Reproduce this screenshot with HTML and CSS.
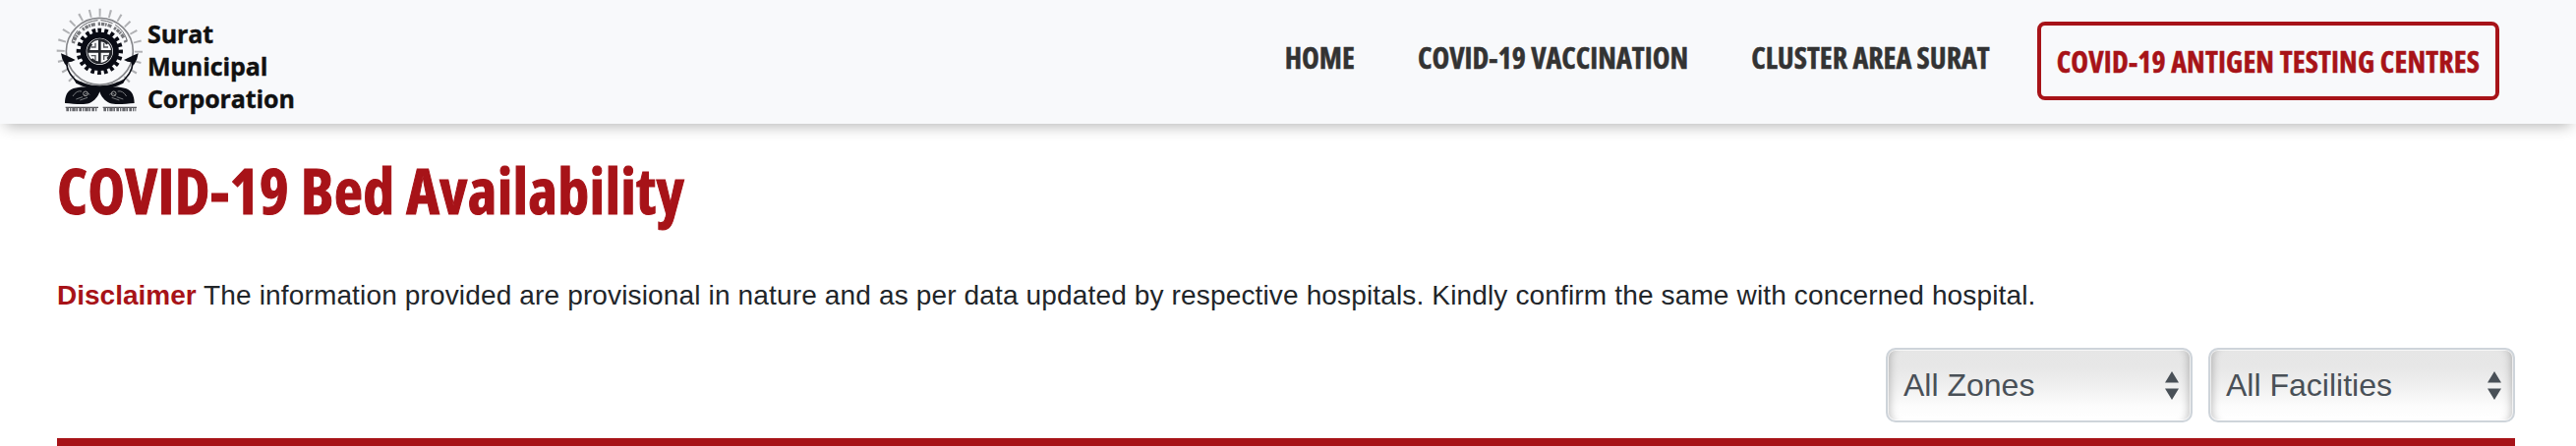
FILE: index.html
```
<!DOCTYPE html>
<html lang="en">

<head>
    <meta charset="UTF-8">
    <meta name="viewport" content="width=device-width, initial-scale=1.0">
    <title>COVID-19 Bed Availability</title>
    <link rel="stylesheet" href="styles.css">
</head>

<body>
    <header class="header">
        <a class="logo" href="#">
            <svg class="emblem" viewBox="0 0 300 348" fill="none">
                <!-- rays -->
                <circle cx="142" cy="145" r="119" stroke="#b0b1b4" stroke-width="24" stroke-dasharray="6 25.16" transform="rotate(-91 142 145)" />
                <path d="M62 246L222 246L200 290L84 290Z" fill="#f8f9fb" />
                <circle cx="142" cy="145" r="102" stroke="#85868a" stroke-width="5" />
                <!-- lettering band -->
                <path d="M61 120A85 85 0 0 1 223 120" stroke="#77787c" stroke-width="10" stroke-dasharray="7 3 10 2 5 3 12 9" />
                <path d="M57 115A88 88 0 0 1 227 115" stroke="#66676b" stroke-width="3" stroke-dasharray="38 9 62 9" />
                <!-- gear -->
                <circle cx="142" cy="145" r="64" stroke="#090b14" stroke-width="14" stroke-dasharray="11 9.106" transform="rotate(-95 142 145)" />
                <circle cx="142" cy="145" r="50" stroke="#090b14" stroke-width="18" />
                <circle cx="142" cy="145" r="37" stroke="#24262c" stroke-width="4" />
                <path d="M142 108V182M105 145H179M142 111Q158 111 166 122M176 145Q176 160 166 168M142 179Q126 179 118 168M108 145Q108 130 118 122" stroke="#24262c" stroke-width="8" />
                <path d="M129 119V132H116M155 119V132H168M129 171V158H116M155 171V158H168" stroke="#55575c" stroke-width="4" />
                <!-- arms -->
                <path d="M42 185C42 205 58 222 74 240M242 185C242 205 226 222 210 240" stroke="#0b0d15" stroke-width="5" />
                <path d="M24 151L42 158L68 171L57 176L46 178L43 190L36 184L28 168ZM260 151L242 158L216 171L227 176L238 178L241 190L248 184L256 168Z" fill="#0b0d15" />
                <path d="M62 226C84 240 112 250 142 250C172 250 200 240 222 226L214 242C190 254 166 262 142 262C118 262 94 254 70 242Z" fill="#0b0d15" />
                <!-- cuffs -->
                <path d="M142 259C120 253 82 250 62 258C43 265 36 281 36 303C61 304 91 310 111 303C127 297 139 280 142 268C145 280 157 297 173 303C193 310 223 304 248 303C248 281 241 265 222 258C202 250 164 253 142 259Z" fill="#0b0d15" />
                <path d="M60 282Q72 263 87 267M70 291L90 284M82 294L105 286M93 280Q104 268 112 277M224 282Q212 263 197 267M214 291L194 284M202 294L179 286M191 280Q180 268 172 277" stroke="#77797d" stroke-width="3" />
                <circle cx="99" cy="274" r="7" stroke="#999" stroke-width="3" />
                <circle cx="185" cy="274" r="7" stroke="#999" stroke-width="3" />
                <!-- motto -->
                <path d="M38 316H138M152 316H255" stroke="#55565b" stroke-width="4" />
                <path d="M40 322H136M154 322H253" stroke="#66676c" stroke-width="11" stroke-dasharray="8 3 4 3 10 2 5 4" />
            </svg>
            <span class="logo-text">Surat<br>Municipal<br>Corporation</span>
        </a>
        <nav class="nav">
            <a href="#">HOME</a>
            <a href="#">COVID-19 VACCINATION</a>
            <a href="#">CLUSTER AREA SURAT</a>
            <a class="btn" href="#">COVID-19 ANTIGEN TESTING CENTRES</a>
        </nav>
    </header>

    <main class="container">
        <h1>COVID-19 Bed Availability</h1>
        <p class="disclaimer"><b>Disclaimer</b> The information provided are provisional in nature and as per data updated by respective hospitals. Kindly confirm the same with concerned hospital.</p>
        <div class="filters">
            <button class="select" type="button">
                <span>All Zones</span>
                <svg class="arrows" viewBox="0 0 14 29"><path d="M7 0L14 11.500H0ZM0 17.500H14L7 29Z" /></svg>
            </button>
            <button class="select" type="button">
                <span>All Facilities</span>
                <svg class="arrows" viewBox="0 0 14 29"><path d="M7 0L14 11.500H0ZM0 17.500H14L7 29Z" /></svg>
            </button>
        </div>
        <div class="bar"></div>
    </main>
</body>

</html>
```
FILE: styles.css
```
* {
    box-sizing: border-box;
    margin: 0;
    padding: 0;
}

body {
    height: 454px;
    overflow: hidden;
    background-color: #fff;
    color: #212529;
    font-family: "Liberation Sans", Arial, sans-serif;
    font-size: 28px;
}

a {
    color: inherit;
    text-decoration: none;
}

.header {
    display: flex;
    justify-content: space-between;
    height: 126px;
    padding: 0 78px 0 54px;
    background-color: #f8f9fb;
    box-shadow: 0 7px 14px -5px rgba(0, 0, 0, 0.3);
}

.logo {
    display: flex;
    padding-top: 4px;
}

.emblem {
    width: 100px;
    height: 116px;
}

.logo-text {
    margin: 14px 0 0 -4px;
    color: #111;
    font: bold 25px/33px "Open Sans", sans-serif;
    letter-spacing: -0.1px;
    -webkit-text-stroke: 0.4px #111;
}

.nav {
    display: flex;
    align-items: flex-start;
    gap: 64px;
    color: #333;
    font: bold 30px/42px "Open Sans", sans-serif;
    font-stretch: 75%;
    letter-spacing: 0.02px;
    white-space: nowrap;
    -webkit-text-stroke: 0.5px;
}

.nav a {
    margin-top: 38px;
}

.nav .btn {
    height: 80px;
    margin: 22px 0 0 -16px;
    padding: 16px 16px 0;
    border: 4px solid #a71318;
    border-radius: 8px;
    color: #a71318;
    letter-spacing: 0.15px;
}

.container {
    padding: 0 62px 0 58px;
}

h1 {
    padding-top: 24px;
    color: #a71318;
    font: bold 64px/88px "Open Sans", sans-serif;
    font-stretch: 75%;
    letter-spacing: 0.25px;
    -webkit-text-stroke: 1px;
}

.disclaimer {
    margin-top: 42px;
    line-height: 42px;
    letter-spacing: 0.15px;
}

.disclaimer b {
    color: #a71318;
    letter-spacing: 0;
}

.filters {
    display: flex;
    justify-content: flex-end;
    gap: 16px;
    margin-top: 32px;
}

.select {
    display: flex;
    align-items: center;
    justify-content: space-between;
    width: 312px;
    height: 76px;
    padding: 0 12px 0 16px;
    border: 2px solid #ced4da;
    border-radius: 10px;
    background: linear-gradient(to bottom, #e6e6e6 0%, #e7e7e7 25%, #f0f0f0 52%, #fcfcfc 80%, #fff 100%);
    box-shadow: inset 0 0 0 1px rgba(255, 255, 255, 0.7), inset 10px 0 8px -8px rgba(0, 0, 0, 0.25), inset -10px 0 8px -8px rgba(0, 0, 0, 0.25);
    color: #495057;
    font-family: inherit;
    font-size: 32px;
}

.arrows {
    width: 14px;
    height: 29px;
    fill: #495057;
}

.bar {
    height: 8px;
    margin-top: 16px;
    background-color: #a71318;
}
```
